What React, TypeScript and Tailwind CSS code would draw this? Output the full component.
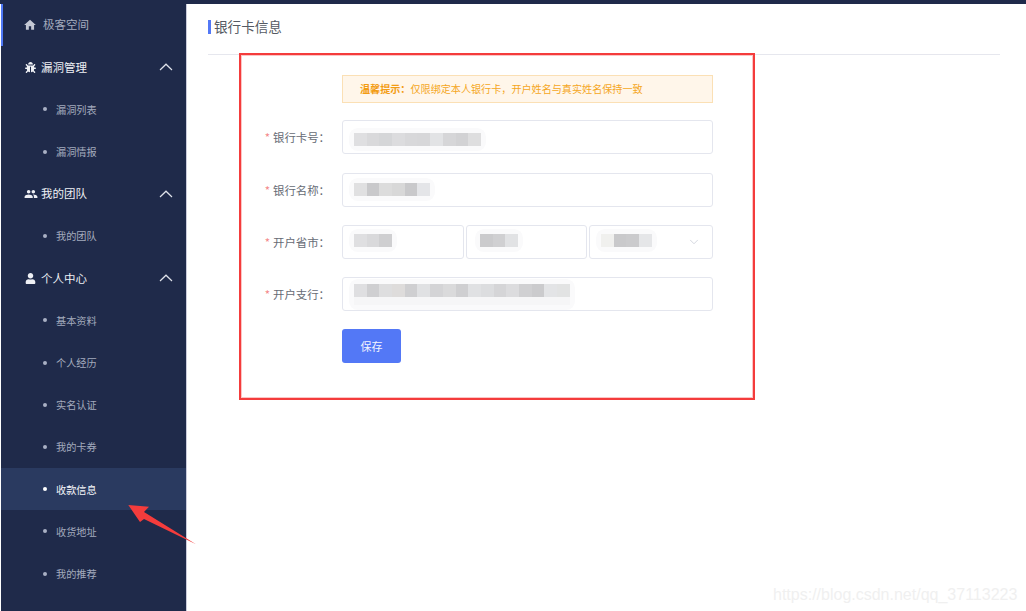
import { ChevronDown } from 'lucide-react';
import { FaBug, FaUser } from 'react-icons/fa';
import { MdHome, MdPeople } from 'react-icons/md';

const CJK = '[font-family:"Noto_Sans_CJK_SC","Liberation_Sans",sans-serif]';

const Heading = ({ icon, label }: { icon: React.ReactNode; label: string }) => (
  <div className="flex h-[42.2px] items-center pl-6 pr-[13px] text-[11.5px] text-[#eef0f5]">
    <span className="flex w-4 justify-start">{icon}</span>
    <span className="flex-1">{label}</span>
    <svg width="14" height="8" viewBox="0 0 14 8" fill="none" stroke="#dfe2ea" strokeWidth="1.2">
      <polyline points="1,7 7,1.2 13,7" />
    </svg>
  </div>
);

const SubItem = ({ label, active }: { label: string; active?: boolean }) => (
  <div className={`flex h-[42.2px] items-center pl-[42px] text-[10.2px] ${active ? 'bg-[#2a3a60] text-[#f5f6fa]' : 'text-[#a3aabd]'}`}>
    <span className={`h-1 w-1 rounded-full ${active ? 'bg-white' : 'bg-[#a9b0c4]'}`} />
    <span className="ml-[9px]">{label}</span>
  </div>
);

const Mosaic = ({ colors, tail, className }: { colors: string[]; tail?: boolean; className?: string }) => (
  <div className={`flex flex-col rounded-[4px] bg-[#fafafb] shadow-[0_0_0_5px_#fafafb] ${className ?? ''}`}>
    <div className="flex h-[13px]">
      {colors.map((c, i) => (
        <div key={i} className="h-full w-[12.7px]" style={{ background: c }} />
      ))}
    </div>
    {tail && <div className="h-[8px] w-full bg-[#f6f6f7]" />}
  </div>
);

const Field = ({ label, children }: { label: string; children: React.ReactNode }) => (
  <div className="flex items-center">
    <label className="w-[134px] pr-[12px] pt-[1px] text-right text-[11.4px] text-[#666b75]">
      <span className="mr-[3px] text-[#f48a8a]">*</span>
      {label}：
    </label>
    {children}
  </div>
);

const inputBox = 'flex h-[34px] items-center rounded-[3px] border border-[#e4e6ee] bg-white pl-[11px]';

export default function App() {
  return (
    <div className={`relative flex h-[611px] w-[1026px] flex-col overflow-hidden bg-white ${CJK}`}>
      <div className="h-1 bg-[#1f2a4a]" />
      <div className="flex flex-1">
        {/* Sidebar */}
        <aside className="ml-px w-[186px] border-r border-[#c9cbdb] bg-[#1f2a4a]">
          <div className="flex h-[42.2px] items-center border-l-2 border-[#4f78f5] pl-[20px] text-[11.5px] text-[#a3aabd]">
            <MdHome size={14} className="text-[#c4c8d4]" />
            <span className="ml-[6px]">极客空间</span>
          </div>
          <Heading icon={<FaBug size={11} />} label="漏洞管理" />
          <SubItem label="漏洞列表" />
          <SubItem label="漏洞情报" />
          <Heading icon={<MdPeople size={14} className="-ml-px" />} label="我的团队" />
          <SubItem label="我的团队" />
          <Heading icon={<FaUser size={11} />} label="个人中心" />
          <SubItem label="基本资料" />
          <SubItem label="个人经历" />
          <SubItem label="实名认证" />
          <SubItem label="我的卡券" />
          <SubItem label="收款信息" active />
          <SubItem label="收货地址" />
          <SubItem label="我的推荐" />
        </aside>

        {/* Main */}
        <main className="flex-1 pl-[21px] pr-[26px]">
          <div className="h-[51px] border-b border-[#e6e7ee] pt-[16px]">
            <div className="flex h-[14px] items-center border-l-[3px] border-[#5378f6] pl-[3px] text-[13.6px] leading-[14px] text-[#555a63]">
              <span className="-mt-[2px]">银行卡信息</span>
            </div>
          </div>
          <div className="flex flex-col pt-[20px]">
            <div className="ml-[134px] flex h-[28px] w-[371px] items-center border border-[#fbe0b5] bg-[#fff6ea] pl-[17px] text-[10.1px] text-[#f5a623]">
              <span className="font-bold text-[#f39c12]">温馨提示：</span>
              仅限绑定本人银行卡，开户姓名与真实姓名保持一致
            </div>
            <div className="mt-[17.4px] flex flex-col gap-[18.3px]">
              <Field label="银行卡号">
                <div className={`${inputBox} w-[371px]`}>
                  <Mosaic className="mt-[4px]" colors={['#dfdfe1', '#d9d9db', '#d5d6d8', '#dcdcde', '#d8d8da', '#d7d7d9', '#e2e3e5', '#d6d6d8', '#d2d2d4', '#dededf']} />
                </div>
              </Field>
              <Field label="银行名称">
                <div className={`${inputBox} w-[371px]`}>
                  <Mosaic colors={['#e0e0e1', '#c9c9cb', '#dcdcdc', '#d8d8d8', '#c9c9cb', '#e4e5e8']} />
                </div>
              </Field>
              <Field label="开户省市">
                <div className="flex w-[371px] gap-[2px]">
                  <div className={`${inputBox} w-[122px]`}>
                    <Mosaic className="mb-[3px]" colors={['#dfdfe1', '#d9d9db', '#cfcfd1']} />
                  </div>
                  <div className={`${inputBox} w-[121px] pl-[13px]`}>
                    <Mosaic className="mb-[3px]" colors={['#cbcbcd', '#d0d0d2', '#e1e2e4']} />
                  </div>
                  <div className={`${inputBox} w-[124px] justify-between pl-[5px] pr-[11px]`}>
                    <Mosaic className="mb-[3px]" colors={['#f0f0ee', '#c9c9cb', '#cbcbcd', '#e5e6e8']} />
                    <ChevronDown size={14} strokeWidth={1.2} className="text-[#c3c7d2]" />
                  </div>
                </div>
              </Field>
              <Field label="开户支行">
                <div className={`${inputBox} w-[371px]`}>
                  <Mosaic
                    tail
                    colors={['#dfdfe1', '#cfcfd1', '#dededf', '#dedcdb', '#cfcfd1', '#e0e1e3', '#d4d4d6', '#dadadb', '#cfcfd1', '#e0e1e3', '#dcdddf', '#d5d5d7', '#dcdcde', '#d0d0d2', '#cbcbcd', '#e3e4e6', '#e2e3e3']}
                  />
                </div>
              </Field>
            </div>
            <button className="ml-[134px] mt-[18px] h-[34px] w-[59px] rounded-[3px] bg-[#5378f6] text-[11px] text-[#f2f4fe]">
              保存
            </button>
          </div>
        </main>
      </div>

      {/* Annotations over the screenshot */}
      <div className="absolute left-[239px] top-[53px] h-[347px] w-[516px] border-2 border-[#f43c3c] shadow-[inset_0_0_0_1px_#fcc5c5]" />
      <svg className="absolute left-0 top-0" width="1026" height="611" viewBox="0 0 1026 611" fill="none">
        <polygon points="128.3,505 149,506.7 144,512 196,544.3 144,519 140,522" fill="#f43c3c" />
      </svg>
      <div className="absolute left-[773px] top-[583px] font-['Liberation_Sans'] text-[16px] text-[#f0f0f0]">
        https://blog.csdn.net/qq_37113223
      </div>
    </div>
  );
}
